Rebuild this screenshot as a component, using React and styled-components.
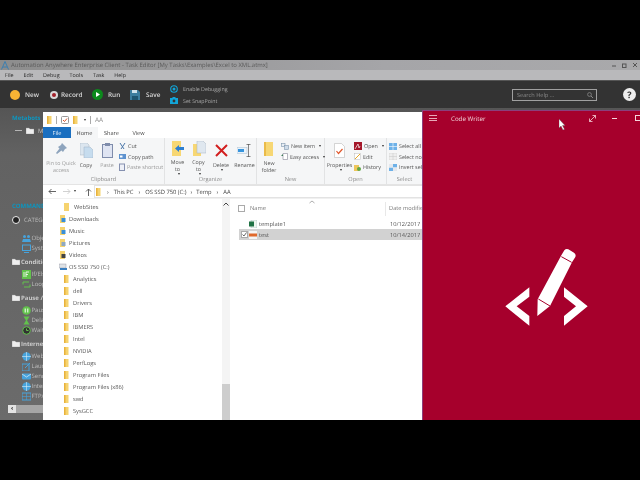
import React from 'react';
import styled, { createGlobalStyle } from 'styled-components';

const Global = createGlobalStyle`
  html, body { margin: 0; padding: 0; background: #000; }
  body { width: 640px; height: 480px; overflow: hidden; font-family: "Open Sans", "Liberation Sans", sans-serif; text-rendering: geometricPrecision; }
  * { box-sizing: border-box; }
  svg { flex: none; }
`;

const Screen = styled.div`
  width: 640px; height: 480px; padding: 60px 0; background: #000; overflow: hidden;
`;
const Desktop = styled.div`
  position: relative; width: 640px; height: 360px; display: flex; flex-direction: column; overflow: hidden;
  filter: blur(0.3px);
`;
const TitleBar = styled.div`
  height: 10px; flex: none; display: flex; align-items: center; padding-left: 1px; gap: 2px;
  background: linear-gradient(90deg, #8d8d8d, #a5a5a8 60%, #a9a9ab);
  color: #5a5a5a; font-size: 5.95px; white-space: nowrap;
`;
const WinControls = styled.div`
  margin-left: auto; display: flex; gap: 6px; padding-right: 3px; align-items: center; color: #555;
`;
const MenuBar = styled.div`
  height: 11px; flex: none; display: flex; align-items: center; padding-left: 5px; gap: 10px;
  background: #b9b9bb; border-bottom: 1px solid #555; color: #2c2c2c; font-size: 5.4px;
`;
const Toolbar = styled.div`
  height: 27px; flex: none; display: flex; align-items: center; padding-left: 10px; background: #333;
  color: #d8d8d8; font-size: 6.4px; font-weight: 600; white-space: nowrap;
`;
const ToolButton = styled.div`
  display: flex; align-items: center; gap: ${p => p.$gap}px; width: ${p => p.$w}px; flex: none;
`;
const Dot = styled.span`
  width: ${p => p.$s}px; height: ${p => p.$s}px; border-radius: 50%; background: ${p => p.$c}; flex: none;
  display: flex; align-items: center; justify-content: center;
`;
const DebugCol = styled.div`
  width: 100px; display: flex; flex-direction: column; gap: 4px; font-size: 5.3px; font-weight: 400; color: #a8a8a8;
`;
const DebugRow = styled.div`
  display: flex; align-items: center; gap: 5px; height: 8px;
`;
const SearchBox = styled.div`
  margin-left: 242px; width: 85px; height: 12px; border: 1px solid #a0a0a0; display: flex; align-items: center;
  padding: 0 3px 0 4px; justify-content: space-between; color: #8a8a8a; font-size: 5.6px; font-weight: 400;
`;
const HelpBtn = styled.div`
  margin-left: 26px; width: 13px; height: 13px; border-radius: 50%; background: #eee; color: #333; font-size: 9px;
  font-weight: 700; display: flex; align-items: center; justify-content: center; flex: none;
`;

const Body = styled.div`
  flex: 1; background: linear-gradient(180deg, #555 0, #626262 15%, #6b6b6b 100%);
`;
const Sidebar = styled.div`
  width: 43px; height: 100%; padding: 6px 0 0 12px; color: #bdbdbd; font-size: 6px; overflow: hidden;
  display: flex; flex-direction: column; white-space: nowrap; position: relative;
`;
const SideHeading = styled.div`
  color: #0d95bf; font-size: 6px; font-weight: 700; height: 8px; line-height: 8px; margin-top: ${p => p.$mt || 0}px;
`;
const TreeLine = styled.div`
  display: flex; align-items: center; gap: 4px; margin: 4px 0 0 3px; height: 9px; color: #c5c5c5; flex: none;
  &::before { content: ''; width: 7px; height: 1px; background: #b5b5b5; flex: none; }
`;
const Radio = styled.div`
  display: flex; align-items: center; gap: 4px; height: 8px; margin-top: 6px; flex: none;
  &::before { content: ''; width: 6px; height: 6px; border-radius: 50%; background: #222; border: 1.5px solid #eee; flex: none; }
`;
const SideGroup = styled.div`
  display: flex; align-items: center; gap: 1px; height: 9px; color: #ccc; font-weight: 700; margin-top: ${p => p.$mt}px; flex: none;
`;
const SideItem = styled.div`
  display: flex; align-items: center; gap: 1px; height: 10px; margin-left: 9.5px; margin-top: ${p => p.$mt || 0}px; flex: none;
`;
const SideScroll = styled.div`
  position: absolute; left: 8px; top: 297px; width: 35px; height: 8px; background: #a6a6a6; display: flex;
  align-items: center;
`;
const SideArrow = styled.div`
  width: 8px; height: 8px; background: #e4e4e4; color: #222; font-size: 6px; font-weight: 700; line-height: 7px; text-align: center;
`;

const Explorer = styled.div`
  position: absolute; left: 43px; top: 52px; width: 380px; height: 308px; background: #fff; display: flex; flex-direction: column;
  color: #555; font-size: 6px; white-space: nowrap; overflow: hidden;
`;
const Qat = styled.div`
  height: 15px; flex: none; display: flex; align-items: center; padding-left: 4px; gap: 4px; color: #888; font-size: 6.4px;
`;
const QatSep = styled.span`
  width: 1px; height: 8px; background: #aaa;
`;
const Tabs = styled.div`
  height: 11px; flex: none; display: flex; align-items: stretch; color: #444; font-size: 5.6px;
`;
const Tab = styled.div`
  width: ${p => p.$w}px; display: flex; align-items: center; justify-content: center;
  background: ${p => p.$file ? '#1a6fc0' : p.$on ? '#f5f6f7' : '#fff'};
  color: ${p => p.$file ? '#e8f2fb' : '#444'};
`;
const Ribbon = styled.div`
  height: 47px; flex: none; display: flex; background: #f5f6f7; border-bottom: 1px solid #e4e4e4;
`;
const Group = styled.div`
  width: ${p => p.$w}px; flex: none; display: flex; flex-direction: column; padding-left: ${p => p.$pl || 0}px;
  border-right: 1px solid #e2e3e4;
`;
const GroupBody = styled.div`
  height: 36px; display: flex; padding-top: 3px;
`;
const GroupLabel = styled.div`
  flex: 1; text-align: center; color: #8a8a8a; font-size: 5.6px; line-height: 10px; margin-left: -${p => p.$pl || 0}px;
`;
const Large = styled.div`
  width: ${p => p.$w}px; flex: none; display: flex; flex-direction: column; align-items: center; text-align: center;
  color: ${p => p.$dim ? '#9a9a9a' : '#555'}; font-size: 5.3px; line-height: 7px;
`;
const LargeIcon = styled.div`
  height: 18px; display: flex; align-items: center; justify-content: center; margin-bottom: 2.5px;
`;
const SmallList = styled.div`
  display: flex; flex-direction: column; margin-left: ${p => p.$ml || 0}px; padding-top: 0;
`;
const SmallItem = styled.div`
  height: 10.5px; display: flex; align-items: center; gap: 2px; font-size: 5.4px; color: ${p => p.$dim ? '#9a9a9a' : '#555'};
`;
const Caret = styled.span`
  display: inline-block; width: 0; height: 0; border: 1.5px solid transparent; border-top: 2px solid #333; border-bottom: 0; margin-left: 2px; vertical-align: middle;
`;
const AddressRow = styled.div`
  height: 13px; flex: none; display: flex; align-items: center; padding-left: 5px; color: #444; font-size: 5.8px;
`;
const NavGlyph = styled.span`
  width: ${p => p.$w}px; text-align: center; flex: none; color: ${p => p.$dim ? '#ccc' : '#555'}; font-size: 7px;
  line-height: 10px;
`;
const AddressBox = styled.div`
  flex: 1; margin-left: 1px; height: 13px; border: 1px solid #e3e3e3; border-right: 0; display: flex; align-items: center; padding: 1px 0 0 1px;
`;
const Crumb = styled.span`
  margin-left: ${p => p.$ml}px;
`;
const Content = styled.div`
  flex: 1; display: flex; min-height: 0; border-top: 1px solid #f0f0f0;
`;
const NavPane = styled.div`
  width: 179px; flex: none; padding-top: 2px; overflow: hidden; display: flex; flex-direction: column; color: #555;
  font-size: 5.7px;
`;
const NavRow = styled.div`
  height: 12px; flex: none; display: flex; align-items: center; gap: ${p => p.$gap ?? 4}px; padding-left: ${p => p.$pl}px;
`;
const ScrollTrack = styled.div`
  width: 8px; flex: none; background: #f4f4f4; display: flex; flex-direction: column; justify-content: space-between; align-items: center;
`;
const ScrollArrow = styled.div`
  margin-top: 3px; width: 6px; height: 4px; display: flex;
`;
const ScrollThumb = styled.div`
  width: 8px; height: 36px; background: #cdcdcd;
`;
const FileList = styled.div`
  flex: 1; display: flex; flex-direction: column; position: relative; color: #666; font-size: 5.7px;
`;
const ColHead = styled.div`
  height: 18px; flex: none; display: flex; align-items: center; padding: 0 0 0 8px; color: #777; position: relative;
`;
const Box = styled.span`
  width: 7px; height: 7px; border: 1px solid #aaa; background: #fff; flex: none; display: flex; align-items: center; justify-content: center;
`;
const SortUp = styled.svg`
  position: absolute; left: 79px; top: 1px;
`;
const ColDivider = styled.span`
  position: absolute; left: 155px; top: 3px; width: 1px; height: 14px; background: #e8e8e8;
`;
const ColName = styled.span`
  width: 139px; flex: none; margin-left: 5px;
`;
const FileRow = styled.div`
  height: 11px; flex: none; margin-left: 9px; display: flex; align-items: center; background: ${p => p.$sel ? '#d2d2d2' : 'transparent'}; color: #555;
  margin-top: ${p => p.$mt || 0}px;
`;
const FileCheck = styled.span`
  width: 10px; flex: none; display: flex; justify-content: center;
`;
const FileName = styled.span`
  margin-left: 2px; width: 131px; flex: none;
`;

const CodeWriter = styled.div`
  position: absolute; left: 422px; top: 50px; width: 218px; height: 310px; background: #a6002c; color: #f1d0d8;
  border-top: 1px solid #8b3f7c; border-left: 1px solid #8b3f7c; display: flex; flex-direction: column;
`;
const CodeHeader = styled.div`
  height: 14px; flex: none; display: flex; align-items: center; padding-left: 6px; font-size: 6.2px; white-space: nowrap;
`;
const Hamburger = styled.div`
  width: 8px; height: 6px; border-top: 1px solid #e8a8b8; border-bottom: 1px solid #e8a8b8; position: relative; flex: none;
  &::after { content: ''; position: absolute; left: 0; right: 0; top: 1.5px; height: 1px; background: #e8a8b8; }
`;
const HeaderTitle = styled.span`
  margin-left: 14px; width: 138px; flex: none;
`;
const HeaderMin = styled.span`
  width: 5px; height: 1px; background: #f5d5dc; margin-left: 16px; flex: none;
`;
const HeaderMax = styled.span`
  width: 6px; height: 6px; border: 1px solid #f5d5dc; margin-left: 18px; flex: none;
`;
const CodeBody = styled.div`
  flex: 1; display: flex; padding: 105px 0 0 67px;
`;
const Cursor = styled.svg`
  position: absolute; left: 136px; top: 8px;
`;

const Folder = ({ w = 5, h = 8 }) => (
  <svg width={w} height={h} viewBox="0 0 5 8"><rect x=".5" y="0" width="4" height="8" fill="#f6d36f" /><rect x="0" y="0" width="1.5" height="8" fill="#e8b23c" /></svg>
);
const SideFolder = () => (
  <svg width="8" height="7" viewBox="0 0 8 7"><path d="M0 1h3l1 1h4v5H0z" fill="#eee" stroke="#999" strokeWidth=".4" /></svg>
);
const Ico = ({ children }) => (
  <svg width="9" height="9" viewBox="0 0 9 9">{children}</svg>
);
const blue = '#47a3dc';
const green = '#62c24c';
const Obj = () => <Ico><circle cx="2.500" cy="2.500" r="1.500" fill={blue} /><circle cx="6.500" cy="2.500" r="1.500" fill={blue} /><path d="M0 8l1-3h7l1 3z" fill={blue} /></Ico>;
const Mon = () => <Ico><rect x=".5" y="1" width="8" height="5.500" fill="none" stroke={blue} /><path d="M2 8.500h5" stroke={blue} /></Ico>;
const IfI = () => <Ico><rect width="9" height="9" fill={green} /><path d="M2 2v5M4 7V2h3M4 4.500h2" stroke="#fff" strokeWidth=".8" fill="none" /></Ico>;
const LoopI = () => <Ico><path d="M1 4.500V2h6M8 4.500V7H2" stroke={green} strokeWidth="1" fill="none" /></Ico>;
const PauseI = () => <Ico><circle cx="4.500" cy="4.500" r="4.300" fill={green} /><path d="M3.200 2.500v4M5.800 2.500v4" stroke="#fff" /></Ico>;
const DelayI = () => <Ico><path d="M1.500.5h6L5 4.500l2.500 4h-6l2.500-4z" fill={green} /></Ico>;
const WaitI = () => <Ico><circle cx="4.500" cy="4.500" r="3.800" fill="#333" stroke={green} /><path d="M4.500 2.500v2h2" stroke={green} fill="none" /></Ico>;
const GlobeI = () => <Ico><circle cx="4.500" cy="4.500" r="4.200" fill={blue} /><path d="M0 4.500h9M4.500 0v9" stroke="#d5ecf8" strokeWidth=".6" /></Ico>;
const LaunchI = () => <Ico><rect x="0" y="2" width="7" height="7" fill="none" stroke={blue} /><path d="M3 6l5-5" stroke={blue} /></Ico>;
const MailI = () => <Ico><rect y="1.500" width="9" height="6" rx="1" fill={blue} /><path d="M0 2l4.500 3L9 2" stroke="#fff" strokeWidth=".6" fill="none" /></Ico>;
const FtpI = () => <Ico><rect y="1" width="9" height="7" fill="none" stroke={blue} /><path d="M0 4.500h9M4.500 1v7" stroke={blue} strokeWidth=".6" /></Ico>;

const navTop = [
  ['WebSites', 21, 4], ['Downloads', 17, 3, '#3a8fd8'], ['Music', 17, 3, '#3a8fd8'], ['Pictures', 17, 3, '#8fa8c0'], ['Videos', 17, 3, '#444'],
];
const navDrive = ['Analytics', 'dell', 'Drivers', 'IBM', 'IBMERS', 'Intel', 'NVIDIA', 'PerfLogs', 'Program Files', 'Program Files (x86)', 'swd', 'SysGCC'];

export default function App() {
  return (
    <Screen>
      <Global />
      <Desktop>
        <TitleBar>
          <svg width="8" height="9" viewBox="0 0 8 9"><path d="M4 .5L.5 8.500M4 .5l3.500 8M2 6h4" stroke="#3c7fb0" strokeWidth="1" fill="none" /></svg>
          <span>Automation Anywhere Enterprise Client - Task Editor [My Tasks\Examples\Excel to XML.atmx]</span>
          <WinControls>
            <svg width="4" height="4" viewBox="0 0 4 4"><path d="M0 3h4" stroke="#555" /></svg>
            <svg width="5" height="5" viewBox="0 0 5 5"><rect x=".5" y="1" width="3.500" height="3.500" fill="none" stroke="#555" /></svg>
            <svg width="4" height="4" viewBox="0 0 4 4"><path d="M0 0l4 4M4 0L0 4" stroke="#555" /></svg>
          </WinControls>
        </TitleBar>
        <MenuBar>
          <span>File</span><span>Edit</span><span>Debug</span><span>Tools</span><span>Task</span><span>Help</span>
        </MenuBar>
        <Toolbar>
          <ToolButton $w={40} $gap={5}><Dot $s={10} $c="#f7b334" />New</ToolButton>
          <ToolButton $w={42} $gap={3}><Dot $s={8} $c="#d9d9d9"><Dot $s={4} $c="#a2202a" /></Dot>Record</ToolButton>
          <ToolButton $w={38} $gap={5}>
            <Dot $s={11} $c="#0c8a1c"><svg width="5" height="5" viewBox="0 0 5 5"><path d="M1 0l4 2.500L1 5z" fill="#fff" /></svg></Dot>Run
          </ToolButton>
          <ToolButton $w={40} $gap={6}>
            <svg width="10" height="10" viewBox="0 0 10 10"><path d="M0 0h8l2 2v8H0z" fill="#3d7d9e" /><rect x="2" y="0" width="5" height="3" fill="#cfe2ec" /><rect x="2" y="6" width="6" height="4" fill="#1f5570" /></svg>
            Save
          </ToolButton>
          <DebugCol>
            <DebugRow>
              <svg width="8" height="8" viewBox="0 0 8 8"><circle cx="4" cy="4" r="3.300" fill="none" stroke="#11a5d8" strokeWidth="1.100" /><circle cx="4" cy="4" r="1.500" fill="#11a5d8" /></svg>
              Enable Debugging
            </DebugRow>
            <DebugRow>
              <svg width="8" height="7" viewBox="0 0 8 7"><path d="M0 1h2l1-1h2l1 1h2v6H0z" fill="#11a5d8" /><circle cx="4" cy="4" r="1.400" fill="#333" /></svg>
              Set SnapPoint
            </DebugRow>
          </DebugCol>
          <SearchBox>
            Search Help ...
            <svg width="6" height="6" viewBox="0 0 6 6"><circle cx="2.500" cy="2.500" r="1.900" fill="none" stroke="#888" strokeWidth=".8" /><path d="M4 4l2 2" stroke="#888" /></svg>
          </SearchBox>
          <HelpBtn>?</HelpBtn>
        </Toolbar>
        <Body>
          <Sidebar>
            <SideHeading>Metabots</SideHeading>
            <TreeLine><SideFolder /><span>My Metabots</span></TreeLine>
            <SideHeading $mt={67}>COMMANDS</SideHeading>
            <Radio>CATEGORIES</Radio>
            <SideItem $mt={9}><Obj />Object Cloning</SideItem>
            <SideItem><Mon />System</SideItem>
            <SideGroup $mt={4}><SideFolder />Conditions</SideGroup>
            <SideItem $mt={3}><IfI />If/Else</SideItem>
            <SideItem><LoopI />Loop</SideItem>
            <SideGroup $mt={4}><SideFolder />Pause / Delay</SideGroup>
            <SideItem $mt={3}><PauseI />Pause</SideItem>
            <SideItem><DelayI />Delay</SideItem>
            <SideItem><WaitI />Wait</SideItem>
            <SideGroup $mt={4}><SideFolder />Internet</SideGroup>
            <SideItem $mt={3}><GlobeI />Web Recorder</SideItem>
            <SideItem><LaunchI />Launch Website</SideItem>
            <SideItem><MailI />Send Email</SideItem>
            <SideItem><GlobeI />Internet</SideItem>
            <SideItem><FtpI />FTP/SFTP</SideItem>
            <SideScroll><SideArrow>‹</SideArrow></SideScroll>
          </Sidebar>
        </Body>

        <Explorer>
          <Qat>
            <Folder w={5} h={8} />
            <QatSep />
            <svg width="8" height="8" viewBox="0 0 8 8"><rect x=".5" y=".5" width="7" height="7" rx="1" fill="#fff" stroke="#999" /><path d="M2 4l1.500 1.500L6 2.500" stroke="#d9532c" fill="none" /></svg>
            <Folder w={5} h={8} />
            <Caret />
            <QatSep />
            <span>AA</span>
          </Qat>
          <Tabs>
            <Tab $file $w={28}>File</Tab>
            <Tab $on $w={27}>Home</Tab>
            <Tab $w={27}>Share</Tab>
            <Tab $w={27}>View</Tab>
          </Tabs>
          <Ribbon>
            <Group $w={122} $pl={3}>
              <GroupBody>
                <Large $w={30} $dim>
                  <LargeIcon><svg width="12" height="12" viewBox="0 0 12 12"><path d="M7 0l5 5-2 1-2 3-1.500-1.500L2 11 1 10l3.500-4.500L3 4l3-2z" fill="#8ea4bd" /></svg></LargeIcon>
                  Pin to Quick<br />access
                </Large>
                <Large $w={20}>
                  <LargeIcon><svg width="13" height="15" viewBox="0 0 13 15"><path d="M0 0h7l2 2v10H0z" fill="#dce6ef" stroke="#a9b6c2" strokeWidth=".5" /><path d="M4 4h6l3 3v8H4z" fill="#c6dcee" stroke="#9fb2c4" strokeWidth=".5" /></svg></LargeIcon>
                  Copy
                </Large>
                <Large $w={22} $dim>
                  <LargeIcon><svg width="11" height="15" viewBox="0 0 11 15"><rect x=".5" y="1.500" width="10" height="13" fill="#dfe4f2" stroke="#7f8cab" /><rect x="3" y="0" width="5" height="3" fill="#7f8cab" /></svg></LargeIcon>
                  Paste
                </Large>
                <SmallList $ml={1}>
                  <SmallItem>
                    <svg width="7" height="7" viewBox="0 0 7 7"><path d="M1 0l4 6M6 0L2 6" stroke="#4a76a8" fill="none" /></svg>
                    Cut
                  </SmallItem>
                  <SmallItem>
                    <svg width="7" height="5" viewBox="0 0 7 5"><rect width="7" height="5" fill="#5f93cf" /><rect x="1" y="1.500" width="2.500" height="2" fill="#fff" /></svg>
                    Copy path
                  </SmallItem>
                  <SmallItem $dim>
                    <svg width="6" height="8" viewBox="0 0 6 8"><rect x=".5" y="1" width="5" height="6.500" fill="#eef0f7" stroke="#8590b0" /></svg>
                    Paste shortcut
                  </SmallItem>
                </SmallList>
              </GroupBody>
              <GroupLabel $pl={3}>Clipboard</GroupLabel>
            </Group>
            <Group $w={92} $pl={2}>
              <GroupBody>
                <Large $w={21}>
                  <LargeIcon><svg width="14" height="15" viewBox="0 0 14 15"><path d="M1 0h9v15H1z" fill="#f7d774" /><path d="M13 6v3H8v2L4 7.500 8 4v2z" fill="#2e7fd0" /></svg></LargeIcon>
                  Move<br />to <Caret />
                </Large>
                <Large $w={21}>
                  <LargeIcon><svg width="14" height="15" viewBox="0 0 14 15"><path d="M1 3h8v12H1z" fill="#f7d774" /><path d="M5 0h6l3 3v9H5z" fill="#dfe7ef" stroke="#a6b3c0" strokeWidth=".5" /></svg></LargeIcon>
                  Copy<br />to <Caret />
                </Large>
                <Large $w={24}>
                  <LargeIcon><svg width="13" height="13" viewBox="0 0 13 13"><path d="M1 1l11 11M12 1L1 12" stroke="#d21f1f" strokeWidth="2" /></svg></LargeIcon>
                  Delete<br /><Caret />
                </Large>
                <Large $w={23}>
                  <LargeIcon><svg width="15" height="13" viewBox="0 0 15 13"><rect x="0" y="3.500" width="10" height="6" fill="#eaf2fa" stroke="#a8bdd0" strokeWidth=".5" /><rect x="1" y="5" width="6" height="3" fill="#3795dd" /><path d="M11.500 0v13M9.500 .5h4M9.500 12.500h4" stroke="#555" strokeWidth=".7" /></svg></LargeIcon>
                  Rename
                </Large>
              </GroupBody>
              <GroupLabel $pl={2}>Organize</GroupLabel>
            </Group>
            <Group $w={68}>
              <GroupBody>
                <Large $w={24}>
                  <LargeIcon><svg width="10" height="14" viewBox="0 0 10 14"><path d="M0 0h9v14H0z" fill="#f7d774" /><path d="M0 0h2v14H0z" fill="#eabb4a" /></svg></LargeIcon>
                  New<br />folder
                </Large>
                <SmallList>
                  <SmallItem>
                    <svg width="8" height="7" viewBox="0 0 8 7"><rect x=".5" y=".5" width="3.500" height="3" fill="#e8eef5" stroke="#7f97ad" strokeWidth=".6" /><rect x="3.500" y="2.500" width="4" height="4" fill="#cfdce9" stroke="#7f97ad" strokeWidth=".6" /></svg>
                    New item<Caret />
                  </SmallItem>
                  <SmallItem>
                    <svg width="7" height="7" viewBox="0 0 7 7"><path d="M2 .5h4.500V6.500H2z" fill="#fff" stroke="#889" strokeWidth=".6" /><path d="M0 3l2-2v2z" fill="#3b7a57" /></svg>
                    Easy access<Caret />
                  </SmallItem>
                </SmallList>
              </GroupBody>
              <GroupLabel>New</GroupLabel>
            </Group>
            <Group $w={62}>
              <GroupBody>
                <Large $w={29}>
                  <LargeIcon><svg width="11" height="15" viewBox="0 0 11 15"><path d="M.5.5h7l3 3v11H.5z" fill="#fff" stroke="#bbb" strokeWidth=".6" /><path d="M2.500 8l2 2.500L8.500 6" stroke="#e0562a" strokeWidth="1.200" fill="none" /></svg></LargeIcon>
                  Properties<br /><Caret />
                </Large>
                <SmallList>
                  <SmallItem>
                    <svg width="8" height="8" viewBox="0 0 8 8"><rect width="8" height="8" fill="#a5172a" /><path d="M1 7l3-5 1 4 1-2" stroke="#fff" fill="none" strokeWidth=".7" /></svg>
                    Open<Caret />
                  </SmallItem>
                  <SmallItem>
                    <svg width="7" height="7" viewBox="0 0 7 7"><rect x=".5" y=".5" width="6" height="6" fill="#fff" stroke="#bbb" strokeWidth=".5" /><path d="M1 6l5-5" stroke="#e6a92c" strokeWidth="1" /></svg>
                    Edit
                  </SmallItem>
                  <SmallItem>
                    <svg width="7" height="7" viewBox="0 0 7 7"><rect y="1" width="5" height="6" fill="#eec65a" /><circle cx="5" cy="5" r="2" fill="#5fa545" /></svg>
                    History
                  </SmallItem>
                </SmallList>
              </GroupBody>
              <GroupLabel>Open</GroupLabel>
            </Group>
            <Group $w={36} $pl={2}>
              <GroupBody>
                <SmallList>
                  <SmallItem>
                    <svg width="8" height="7" viewBox="0 0 8 7"><path d="M0 0h8v7H0z" fill="#6db1e8" /><path d="M4 0v7M0 3.500h8" stroke="#fff" strokeWidth=".6" /></svg>
                    Select all
                  </SmallItem>
                  <SmallItem>
                    <svg width="8" height="7" viewBox="0 0 8 7"><path d="M0 0h8v7H0z" fill="#eee" stroke="#ccc" strokeWidth=".5" /><path d="M4 0v7M0 3.500h8" stroke="#ccc" strokeWidth=".6" /></svg>
                    Select none
                  </SmallItem>
                  <SmallItem>
                    <svg width="8" height="7" viewBox="0 0 8 7"><path d="M0 3.500h4V7H0zM4 0h4v3.500H4z" fill="#6db1e8" /><path d="M0 0h4v3.500H0zM4 3.500h4V7H4z" fill="#e4e8ee" /></svg>
                    Invert selection
                  </SmallItem>
                </SmallList>
              </GroupBody>
              <GroupLabel $pl={2}>Select</GroupLabel>
            </Group>
          </Ribbon>
          <AddressRow>
            <svg width="8" height="7" viewBox="0 0 8 7"><path d="M8 3.500H1M3.500 1L1 3.500 3.500 6" fill="none" stroke="#555" strokeWidth=".9" /></svg>
            <NavGlyph $w={7} />
            <svg width="8" height="7" viewBox="0 0 8 7"><path d="M0 3.500h7M4.500 1L7 3.500 4.500 6" fill="none" stroke="#ccc" strokeWidth=".9" /></svg>
            <NavGlyph $w={5}><Caret /></NavGlyph>
            <NavGlyph $w={9} />
            <svg width="7" height="8" viewBox="0 0 7 8"><path d="M3.500 8V1M1 3.500L3.500 1 6 3.500" fill="none" stroke="#555" strokeWidth=".9" /></svg>
            <NavGlyph $w={1} />
            <AddressBox>
              <Folder w={5} h={8} />
              <Crumb $ml={6}>›</Crumb>
              <Crumb $ml={5}>This PC</Crumb>
              <Crumb $ml={5}>›</Crumb>
              <Crumb $ml={5}>OS SSD 750 (C:)</Crumb>
              <Crumb $ml={4}>›</Crumb>
              <Crumb $ml={4}>Temp</Crumb>
              <Crumb $ml={5}>›</Crumb>
              <Crumb $ml={5}>AA</Crumb>
            </AddressBox>
          </AddressRow>
          <Content>
            <NavPane>
              {navTop.map(([name, pl, gap, c]) => (
                <NavRow key={name} $pl={pl} $gap={gap}>
                  <svg width="6" height="8" viewBox="0 0 6 8"><rect x="0" width="5" height="8" fill="#f6d36f" />{c && <rect x="1.500" y="3" width="4" height="4" fill={c} />}</svg>
                  {name}
                </NavRow>
              ))}
              <NavRow $pl={16} $gap={2}>
                <svg width="8" height="8" viewBox="0 0 8 8"><rect x="0" y="1" width="7" height="4" fill="#dfe3e6" stroke="#889" strokeWidth=".4" /><rect x="1" y="5" width="7" height="2" fill="#3a7fc0" /></svg>
                OS SSD 750 (C:)
              </NavRow>
              {navDrive.map(name => (
                <NavRow key={name} $pl={21} $gap={4}><Folder />{name}</NavRow>
              ))}
            </NavPane>
            <ScrollTrack>
              <ScrollArrow>
                <svg width="6" height="4" viewBox="0 0 6 4"><path d="M.5 3.500L3 1l2.500 2.500" fill="none" stroke="#444" /></svg>
              </ScrollArrow>
              <ScrollThumb />
            </ScrollTrack>
            <FileList>
              <ColHead>
                <SortUp width="6" height="4" viewBox="0 0 6 4"><path d="M.5 3L3 1l2.500 2" fill="none" stroke="#999" strokeWidth=".8" /></SortUp>
                <Box />
                <ColName>Name</ColName>
                <ColDivider />
                <span>Date modified</span>
              </ColHead>
              <FileRow $mt={1}>
                <FileCheck />
                <svg width="8" height="8" viewBox="0 0 8 8"><rect x="2" width="6" height="8" fill="#eef5ef" stroke="#8aa" strokeWidth=".4" /><rect y="1.500" width="5" height="5" fill="#1f7244" /></svg>
                <FileName>template1</FileName>
                <span>10/12/2017</span>
              </FileRow>
              <FileRow $sel>
                <FileCheck><Box><svg width="5" height="5" viewBox="0 0 5 5"><path d="M.5 2.500l1.500 1.500L4.500 .5" fill="none" stroke="#444" strokeWidth=".8" /></svg></Box></FileCheck>
                <svg width="8" height="8" viewBox="0 0 8 8"><rect width="8" height="8" fill="#f5f5f5" /><rect y="2.500" width="8" height="3" fill="#e0692c" /></svg>
                <FileName>test</FileName>
                <span>10/14/2017</span>
              </FileRow>
            </FileList>
          </Content>
        </Explorer>

        <CodeWriter>
          <CodeHeader>
            <Hamburger />
            <HeaderTitle>Code Writer</HeaderTitle>
            <svg width="7" height="7" viewBox="0 0 7 7"><path d="M.5 6.500l6-6M3.500.5h3v3M.5 3.500v3h3" fill="none" stroke="#f5d5dc" strokeWidth=".8" /></svg>
            <HeaderMin />
            <HeaderMax />
          </CodeHeader>
          <CodeBody>
            <svg width="110" height="110" viewBox="0 0 330 330">
              <path d="M118 172v28L80 229l38 29v29L46 229zM222 172v28l36 29-36 29v29l71-58z" fill="#fff" />
              <path d="M142 258l1-50L214 76l9-15q5-6 12-3l17 10q7 5 4 13l-10 16-66 131z" fill="#fff" />
              <path d="M145 207l35 21M214 80l31 17" stroke="#a6002c" strokeWidth="3" fill="none" />
            </svg>
          </CodeBody>
          <Cursor width="7" height="11" viewBox="0 0 7 11"><path d="M0 0v9l2-2 2 4 1.500-.7-2-3.800H6z" fill="#fff" stroke="#555" strokeWidth=".4" /></Cursor>
        </CodeWriter>
      </Desktop>
    </Screen>
  );
}
